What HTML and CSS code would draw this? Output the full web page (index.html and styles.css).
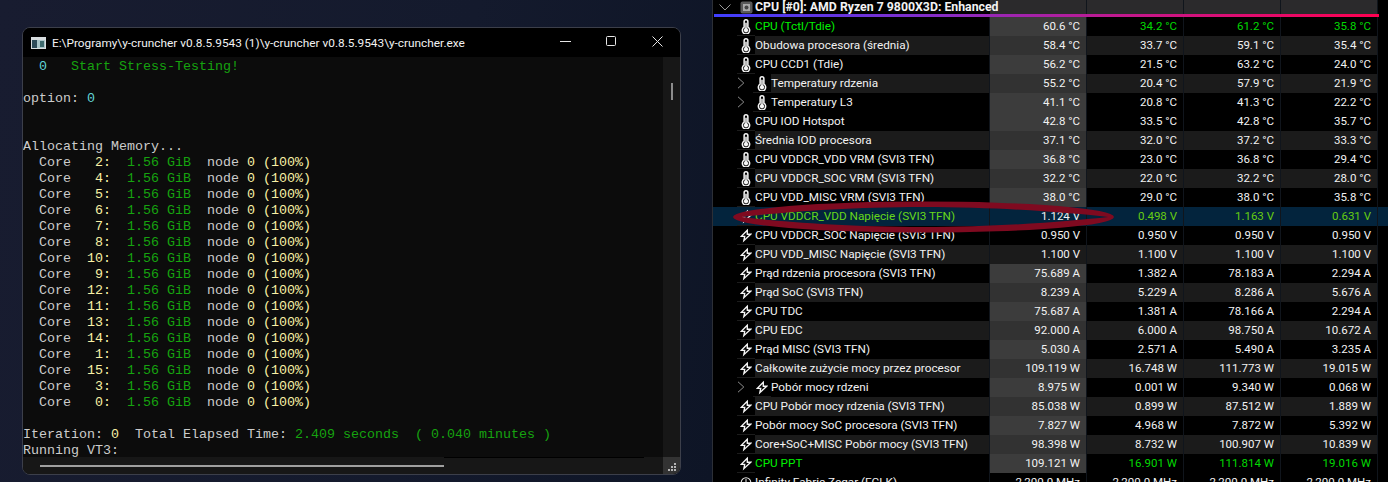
FILE: index.html
```html
<!DOCTYPE html>
<html lang="pl">
<head>
<meta charset="utf-8">
<title>y-cruncher i HWiNFO</title>
<link rel="stylesheet" href="styles.css">
</head>
<body>
<svg class="defs" width="0" height="0" aria-hidden="true">
  <symbol id="therm" viewBox="0 0 12 16">
    <path d="M4 2.8a2 2 0 0 1 4 0v5.9a3.9 3.9 0 1 1-4 0z" fill="#000" stroke="#f6f6f6" stroke-width="1.6"/>
    <circle cx="6" cy="12" r="2.3" fill="#f6f6f6"/>
    <rect x="5.2" y="4" width="1.6" height="7" fill="#f6f6f6"/>
  </symbol>
  <symbol id="bolt" viewBox="0 0 14 14">
    <path d="M8.500 1 1.500 8h4l-1 5 8-7.500h-4z" fill="none" stroke="#f6f6f6" stroke-width="1.600" stroke-linejoin="miter"/>
  </symbol>
  <symbol id="clock" viewBox="0 0 14 14">
    <circle cx="7" cy="7" r="5.6" fill="none" stroke="#e8e8e8" stroke-width="1.2"/>
    <path d="M7 3v4" stroke="#e8e8e8" stroke-width="1.2"/>
  </symbol>
  <symbol id="chev" viewBox="0 0 8 12">
    <path d="M1 .8 6.800 6 1 11.200" fill="none" stroke="#8d8d8d" stroke-width="1"/>
  </symbol>
</svg>

<section class="desk">
  <div class="window">
    <header class="titlebar">
      <svg class="appicon" width="15" height="12" viewBox="0 0 15 12"><rect width="15" height="12" fill="#d8dde0"/><rect x="1" y="3" width="5" height="8" fill="#2d4a58"/><rect x="6" y="3" width="8" height="8" fill="#a9c4c8"/><rect x="9" y="4" width="4" height="6" fill="#3d6a6e"/></svg>
      <span class="wintitle">E:\Programy\y-cruncher v0.8.5.9543 (1)\y-cruncher v0.8.5.9543\y-cruncher.exe</span>
      <div class="winbtns">
        <svg width="11" height="11" viewBox="0 0 11 11"><path d="M0 5.500h11" stroke="#e6e6e6"/></svg>
        <svg width="11" height="11" viewBox="0 0 11 11"><rect x=".5" y=".5" width="9" height="9" rx="1" fill="none" stroke="#e6e6e6"/></svg>
        <svg width="11" height="11" viewBox="0 0 11 11"><path d="M.5.5l10 10M10.500.5l-10 10" stroke="#e6e6e6"/></svg>
      </div>
    </header>
    <div class="console-wrap">
<pre class="console">  <span class="cy">0</span>   <span class="gr">Start Stress-Testing!</span>

option: <span class="cy">0</span>


Allocating Memory...
  Core   <span class="ye">2:</span>  <span class="gr">1.56 GiB</span>  node <span class="ye">0 (100%)</span>
  Core   <span class="ye">4:</span>  <span class="gr">1.56 GiB</span>  node <span class="ye">0 (100%)</span>
  Core   <span class="ye">5:</span>  <span class="gr">1.56 GiB</span>  node <span class="ye">0 (100%)</span>
  Core   <span class="ye">6:</span>  <span class="gr">1.56 GiB</span>  node <span class="ye">0 (100%)</span>
  Core   <span class="ye">7:</span>  <span class="gr">1.56 GiB</span>  node <span class="ye">0 (100%)</span>
  Core   <span class="ye">8:</span>  <span class="gr">1.56 GiB</span>  node <span class="ye">0 (100%)</span>
  Core  <span class="ye">10:</span>  <span class="gr">1.56 GiB</span>  node <span class="ye">0 (100%)</span>
  Core   <span class="ye">9:</span>  <span class="gr">1.56 GiB</span>  node <span class="ye">0 (100%)</span>
  Core  <span class="ye">12:</span>  <span class="gr">1.56 GiB</span>  node <span class="ye">0 (100%)</span>
  Core  <span class="ye">11:</span>  <span class="gr">1.56 GiB</span>  node <span class="ye">0 (100%)</span>
  Core  <span class="ye">13:</span>  <span class="gr">1.56 GiB</span>  node <span class="ye">0 (100%)</span>
  Core  <span class="ye">14:</span>  <span class="gr">1.56 GiB</span>  node <span class="ye">0 (100%)</span>
  Core   <span class="ye">1:</span>  <span class="gr">1.56 GiB</span>  node <span class="ye">0 (100%)</span>
  Core  <span class="ye">15:</span>  <span class="gr">1.56 GiB</span>  node <span class="ye">0 (100%)</span>
  Core   <span class="ye">3:</span>  <span class="gr">1.56 GiB</span>  node <span class="ye">0 (100%)</span>
  Core   <span class="ye">0:</span>  <span class="gr">1.56 GiB</span>  node <span class="ye">0 (100%)</span>

Iteration: <span class="ye">0</span>  Total Elapsed Time: <span class="gr">2.409 seconds  ( 0.040 minutes )</span>
Running VT3:</pre>
      <div class="vscroll"><div class="vthumb"></div></div>
    </div>
    <footer class="hscroll">
      <div class="htrack"><div class="hthumb"></div><div class="hline"></div></div>
      <div class="grip"><svg width="10" height="9" viewBox="0 0 10 9"><path d="M7 0h2v2H7zM4 3h2v2H4zM7 3h2v2H7zM1 6h2v2H1zM4 6h2v2H4zM7 6h2v2H7z" fill="#b5b5b5"/></svg></div>
    </footer>
  </div>
</section>

<section class="panel">
  <div class="head">
    <div class="headlabel">
      <svg class="headchev" width="12" height="7" viewBox="0 0 12 7"><path d="M.5.5 6 6 11.500.5" fill="none" stroke="#9a9a9a"/></svg>
      <svg class="cpuicon" width="13" height="13" viewBox="0 0 13 13"><rect x=".5" y=".5" width="12" height="12" rx="2" fill="#5a5a5a"/><rect x="3" y="3" width="7" height="7" fill="#a8a8a8"/><circle cx="6.500" cy="6.500" r="2" fill="#444"/></svg>
      <b class="headtext">CPU [#0]: AMD Ryzen 7 9800X3D: Enhanced</b>
    </div>
    <div class="headcell"></div><div class="headcell"></div><div class="headcell"></div><div class="headcell"></div>
  </div>
  <div class="bar"></div>

  <div class="row lime"><div class="label"><span class="ic"><svg><use href="#therm"/></svg></span><span class="name">CPU (Tctl/Tdie)</span></div><div class="val hi">60.6 °C</div><div class="val">34.2 °C</div><div class="val">61.2 °C</div><div class="val">35.8 °C</div></div>
  <div class="row alt"><div class="label"><span class="ic"><svg><use href="#therm"/></svg></span><span class="name">Obudowa procesora (średnia)</span></div><div class="val hi">58.4 °C</div><div class="val">33.7 °C</div><div class="val">59.1 °C</div><div class="val">35.4 °C</div></div>
  <div class="row"><div class="label"><span class="ic"><svg><use href="#therm"/></svg></span><span class="name">CPU CCD1 (Tdie)</span></div><div class="val hi">56.2 °C</div><div class="val">21.5 °C</div><div class="val">63.2 °C</div><div class="val">24.0 °C</div></div>
  <div class="row alt"><div class="label sub"><svg class="chev"><use href="#chev"/></svg><span class="ic"><svg><use href="#therm"/></svg></span><span class="name">Temperatury rdzenia</span></div><div class="val hi">55.2 °C</div><div class="val">20.4 °C</div><div class="val">57.9 °C</div><div class="val">21.9 °C</div></div>
  <div class="row"><div class="label sub"><svg class="chev"><use href="#chev"/></svg><span class="ic"><svg><use href="#therm"/></svg></span><span class="name">Temperatury L3</span></div><div class="val hi">41.1 °C</div><div class="val">20.8 °C</div><div class="val">41.3 °C</div><div class="val">22.2 °C</div></div>
  <div class="row"><div class="label"><span class="ic"><svg><use href="#therm"/></svg></span><span class="name">CPU IOD Hotspot</span></div><div class="val hi">42.8 °C</div><div class="val">33.5 °C</div><div class="val">42.8 °C</div><div class="val">35.7 °C</div></div>
  <div class="row alt"><div class="label"><span class="ic"><svg><use href="#therm"/></svg></span><span class="name">Średnia IOD procesora</span></div><div class="val hi">37.1 °C</div><div class="val">32.0 °C</div><div class="val">37.2 °C</div><div class="val">33.3 °C</div></div>
  <div class="row"><div class="label"><span class="ic"><svg><use href="#therm"/></svg></span><span class="name">CPU VDDCR_VDD VRM (SVI3 TFN)</span></div><div class="val hi">36.8 °C</div><div class="val">23.0 °C</div><div class="val">36.8 °C</div><div class="val">29.4 °C</div></div>
  <div class="row alt"><div class="label"><span class="ic"><svg><use href="#therm"/></svg></span><span class="name">CPU VDDCR_SOC VRM (SVI3 TFN)</span></div><div class="val hi">32.2 °C</div><div class="val">22.0 °C</div><div class="val">32.2 °C</div><div class="val">28.0 °C</div></div>
  <div class="row"><div class="label"><span class="ic"><svg><use href="#therm"/></svg></span><span class="name">CPU VDD_MISC VRM (SVI3 TFN)</span></div><div class="val hi">38.0 °C</div><div class="val">29.0 °C</div><div class="val">38.0 °C</div><div class="val">35.8 °C</div></div>
  <div class="row sel"><div class="label"><span class="ic"><svg><use href="#bolt"/></svg></span><span class="name">CPU VDDCR_VDD Napięcie (SVI3 TFN)</span></div><div class="val">1.124 V</div><div class="val">0.498 V</div><div class="val">1.163 V</div><div class="val">0.631 V</div></div>
  <div class="row"><div class="label"><span class="ic"><svg><use href="#bolt"/></svg></span><span class="name">CPU VDDCR_SOC Napięcie (SVI3 TFN)</span></div><div class="val">0.950 V</div><div class="val">0.950 V</div><div class="val">0.950 V</div><div class="val">0.950 V</div></div>
  <div class="row alt"><div class="label"><span class="ic"><svg><use href="#bolt"/></svg></span><span class="name">CPU VDD_MISC Napięcie (SVI3 TFN)</span></div><div class="val">1.100 V</div><div class="val">1.100 V</div><div class="val">1.100 V</div><div class="val">1.100 V</div></div>
  <div class="row"><div class="label"><span class="ic"><svg><use href="#bolt"/></svg></span><span class="name">Prąd rdzenia procesora (SVI3 TFN)</span></div><div class="val hi">75.689 A</div><div class="val">1.382 A</div><div class="val">78.183 A</div><div class="val">2.294 A</div></div>
  <div class="row alt"><div class="label"><span class="ic"><svg><use href="#bolt"/></svg></span><span class="name">Prąd SoC (SVI3 TFN)</span></div><div class="val hi">8.239 A</div><div class="val">5.229 A</div><div class="val">8.286 A</div><div class="val">5.676 A</div></div>
  <div class="row"><div class="label"><span class="ic"><svg><use href="#bolt"/></svg></span><span class="name">CPU TDC</span></div><div class="val hi">75.687 A</div><div class="val">1.381 A</div><div class="val">78.166 A</div><div class="val">2.294 A</div></div>
  <div class="row alt"><div class="label"><span class="ic"><svg><use href="#bolt"/></svg></span><span class="name">CPU EDC</span></div><div class="val hi">92.000 A</div><div class="val">6.000 A</div><div class="val">98.750 A</div><div class="val">10.672 A</div></div>
  <div class="row"><div class="label"><span class="ic"><svg><use href="#bolt"/></svg></span><span class="name">Prąd MISC (SVI3 TFN)</span></div><div class="val hi">5.030 A</div><div class="val">2.571 A</div><div class="val">5.490 A</div><div class="val">3.235 A</div></div>
  <div class="row alt"><div class="label"><span class="ic"><svg><use href="#bolt"/></svg></span><span class="name">Całkowite zużycie mocy przez procesor</span></div><div class="val hi">109.119 W</div><div class="val">16.748 W</div><div class="val">111.773 W</div><div class="val">19.015 W</div></div>
  <div class="row"><div class="label sub"><svg class="chev"><use href="#chev"/></svg><span class="ic"><svg><use href="#bolt"/></svg></span><span class="name">Pobór mocy rdzeni</span></div><div class="val hi">8.975 W</div><div class="val">0.001 W</div><div class="val">9.340 W</div><div class="val">0.068 W</div></div>
  <div class="row alt"><div class="label"><span class="ic"><svg><use href="#bolt"/></svg></span><span class="name">CPU Pobór mocy rdzenia (SVI3 TFN)</span></div><div class="val hi">85.038 W</div><div class="val">0.899 W</div><div class="val">87.512 W</div><div class="val">1.889 W</div></div>
  <div class="row"><div class="label"><span class="ic"><svg><use href="#bolt"/></svg></span><span class="name">Pobór mocy SoC procesora (SVI3 TFN)</span></div><div class="val hi">7.827 W</div><div class="val">4.968 W</div><div class="val">7.872 W</div><div class="val">5.392 W</div></div>
  <div class="row alt"><div class="label"><span class="ic"><svg><use href="#bolt"/></svg></span><span class="name">Core+SoC+MISC Pobór mocy (SVI3 TFN)</span></div><div class="val hi">98.398 W</div><div class="val">8.732 W</div><div class="val">100.907 W</div><div class="val">10.839 W</div></div>
  <div class="row lime"><div class="label"><span class="ic"><svg><use href="#bolt"/></svg></span><span class="name">CPU PPT</span></div><div class="val hi">109.121 W</div><div class="val">16.901 W</div><div class="val">111.814 W</div><div class="val">19.016 W</div></div>
  <div class="row"><div class="label"><span class="ic"><svg><use href="#clock"/></svg></span><span class="name">Infinity Fabric Zegar (FCLK)</span></div><div class="val">2,200.0 MHz</div><div class="val">2,200.0 MHz</div><div class="val">2,200.0 MHz</div><div class="val">2,200.0 MHz</div></div>

  <svg class="mark" width="384" height="34" viewBox="0 0 384 34" aria-hidden="true">
    <path fill-rule="evenodd" fill="#7f0a20" d="M1 17a190.500 15.500 0 1 0 381 0a190.500 15.500 0 1 0-381 0zM10 17C42 13 112 7 191 7C270 7 340 13 376 17C340 21 270 27 191 27C112 27 42 21 10 17z"/>
  </svg>
</section>
</body>
</html>
```

FILE: styles.css
```css
* { box-sizing: border-box; }

html, body { margin: 0; height: 482px; overflow: hidden; }

body {
  display: flex;
  background: #000;
  font-family: Roboto, "Liberation Sans", sans-serif;
  font-size: 11.75px;
  color: #f2f2f2;
}

.defs { position: absolute; }

.desk {
  width: 712px;
  height: 482px;
  flex: none;
  padding: 27px 31px 0 22px;
  background: linear-gradient(100deg, #181c30 0%, #141a2d 60%, #0e1526 100%);
}

.window {
  width: 659px;
  height: 448px;
  display: flex;
  flex-direction: column;
  border: 1px solid #3c3f4a;
  border-radius: 8px;
  overflow: hidden;
  background: #0c0c0c;
}

.titlebar {
  height: 29px;
  flex: none;
  display: flex;
  align-items: center;
  padding-left: 8px;
  background: #000;
}

.appicon { margin-right: 6px; flex: none; }

.wintitle { flex: 1; color: #f2f2f2; font-size: 11.83px; white-space: nowrap; }

.winbtns {
  display: flex;
  gap: 35px;
  padding: 0 17px 2px 0;
}

.console-wrap { flex: 1; display: flex; min-height: 0; }

.console {
  flex: 1;
  margin: 0;
  padding-top: 2px;
  overflow: hidden;
  font-family: "Liberation Mono", "DejaVu Sans Mono", monospace;
  font-size: 13.33px;
  line-height: 16px;
  color: #cccccc;
}

.cy { color: #61d6d6; }
.gr { color: #16a30f; }
.ye { color: #f9f1a5; }

.vscroll {
  width: 17px;
  flex: none;
  padding: 26px 0 0 8px;
  background: #171717;
}

.vthumb { width: 2px; height: 17px; background: #8c8c8c; }

.hscroll { height: 17px; flex: none; display: flex; background: #171717; }

.htrack { flex: 1; position: relative; }

.hthumb {
  position: absolute;
  left: 17px;
  top: 8px;
  width: 404px;
  height: 2px;
  background: #a0a0a0;
}

.hline {
  position: absolute;
  left: 421px;
  top: 0;
  width: 200px;
  height: 1px;
  background: #000;
}

.grip {
  width: 17px;
  flex: none;
  display: flex;
  align-items: flex-end;
  justify-content: center;
  padding-bottom: 2px;
  background: #333;
}

.panel {
  position: relative;
  flex: 1;
  border-left: 1px solid #2c2f36;
  background: #000;
}

.head { height: 14px; display: flex; }

.headlabel {
  width: 277px;
  flex: none;
  display: flex;
  align-items: center;
  padding-left: 6px;
  white-space: nowrap;
}

.headchev { margin-right: 9px; flex: none; }

.cpuicon { margin-right: 2px; flex: none; }

.headtext { font-size: 12.3px; line-height: 14px; position: relative; z-index: 1; flex: none; }

.headcell {
  width: 97px;
  flex: none;
  background: #2b2a2c;
  border-right: 1px solid #10151c;
}

.bar {
  width: 665px;
  height: 3px;
  margin-left: 1px;
  background: linear-gradient(90deg, #3f3fff 0%, #8a2cc4 35%, #c01a90 60%, #ff0050 100%);
}

.row { height: 19px; display: flex; line-height: 19px; }

.label {
  width: 277px;
  flex: none;
  display: flex;
  padding-left: 24px;
  border-right: 1px solid #10151c;
  white-space: nowrap;
}

.chev { width: 8px; height: 12px; margin: 3px 8px 0 0; flex: none; }

.ic {
  width: 18px;
  flex: none;
  display: flex;
  align-items: center;
  justify-content: center;
  border-bottom: 1px solid #1c1c1c;
}

.ic svg { width: 12px; height: 15px; }

.name { flex: 1; padding-left: 0; }

.val {
  width: 97px;
  flex: none;
  padding-right: 6px;
  font-size: 11.5px;
  text-align: right;
  border-right: 1px solid #10151c;
  color: #f2f2f2;
}

.alt .name, .alt .val { background: #1b1b1b; }

.val.hi { background: #3c3c3c; }
.alt .val.hi { background: #323232; }

.lime .name { color: #00f000; }
.lime .val { color: #00d800; }
.lime .val.hi { color: #f2f2f2; }

.row.sel { background: #03243d; }
.sel .name { color: #66d81a; }
.sel .val { color: #66cc11; }
.sel .val:nth-child(2) { color: #f2f2f2; }

.mark {
  position: absolute;
  left: 19px;
  top: 200px;
  pointer-events: none;
}
```
